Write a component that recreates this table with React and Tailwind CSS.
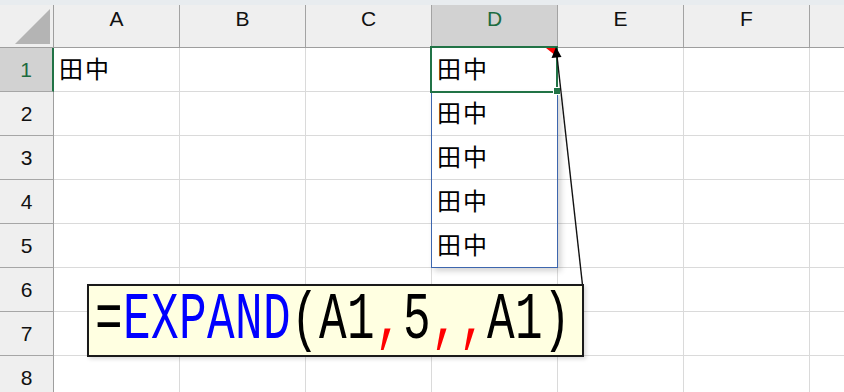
import React from "react";

const COLS = ["A", "B", "C", "D", "E", "F", ""];
const ROWS = [1, 2, 3, 4, 5, 6, 7, 8];

// cells holding a value: row -> column letter
const values = {
  1: { A: "田中", D: "田中" },
  2: { D: "田中" },
  3: { D: "田中" },
  4: { D: "田中" },
  5: { D: "田中" },
};

const GREEN = "#217346";

const CellText = ({ children }) => (
  <span className="pl-[5px] pb-[3px] text-[24px] leading-none tracking-[2px] text-black [font-family:'Noto_Sans_CJK_JP','Noto_Sans_CJK_SC',sans-serif]">
    {children}
  </span>
);

const HeaderRow = () => (
  <div className="flex h-[43px] bg-[#efefef] border-b border-[#9e9e9e]">
    <div className="w-[54px] shrink-0 border-r border-[#9e9e9e]">
      <svg width="53" height="42" viewBox="0 0 53 42">
        <polygon points="15,39 50,39 50,4" fill="#b4b4b4" />
      </svg>
    </div>
    {COLS.map((c, i) => {
      const active = c === "D";
      return (
        <div
          key={i}
          className={`w-[126px] shrink-0 border-r border-[#a3a3a3] flex justify-center pt-[3px] text-[21px] leading-[21px] [font-family:'Liberation_Sans',Arial,sans-serif] ${
            active ? "bg-[#d2d2d2] text-[#1d6b40]" : "text-[#111]"
          }`}
        >
          {c}
        </div>
      );
    })}
  </div>
);

const SheetRow = ({ n }) => {
  const active = n === 1;
  return (
    <div className="flex h-[44px]">
      <div
        className={`w-[54px] shrink-0 flex items-center justify-center border-b border-[#a6a6a6] text-[21px] [font-family:'Liberation_Sans',Arial,sans-serif] ${
          active
            ? "bg-[#d2d2d2] border-r-2 border-r-[#217346] text-[#1d6b40]"
            : "bg-[#efefef] border-r border-r-[#9e9e9e] text-[#111]"
        }`}
      >
        {n}
      </div>
      {COLS.map((c, i) => (
        <div
          key={i}
          className="w-[126px] shrink-0 flex items-center border-r border-b border-[#dadada]"
        >
          {values[n]?.[c] && <CellText>{values[n][c]}</CellText>}
        </div>
      ))}
    </div>
  );
};

export default function App() {
  return (
    <div className="relative w-[844px] h-[392px] overflow-hidden bg-white">
      <div className="h-[5px] bg-[#e8ecef]" />
      <HeaderRow />
      {ROWS.map((n) => (
        <SheetRow key={n} n={n} />
      ))}

      {/* spill range D2:D5 */}
      <div className="absolute left-[431px] top-[92px] w-[127px] h-[176px] border border-[#3d66ae] shadow-[3px_3px_6px_rgba(0,0,0,0.18)] pointer-events-none" />

      {/* active cell D1 */}
      <div
        className="absolute left-[430px] top-[46px] w-[128px] h-[47px] border-2 pointer-events-none"
        style={{ borderColor: GREEN }}
      />
      <div className="absolute left-[553px] top-[87px] w-[8px] h-[8px] bg-[#217346] border border-white" />

      {/* comment indicator + connector */}
      <svg
        className="absolute left-0 top-0 pointer-events-none"
        width="844"
        height="392"
        viewBox="0 0 844 392"
      >
        <polygon points="546,48 556,48 556,56" fill="#ff0000" />
        <line x1="557" y1="56" x2="582.5" y2="285" stroke="#111" strokeWidth="1.4" />
        <polygon points="556,47 551.5,58 561.5,57" fill="#000" />
      </svg>

      {/* comment box */}
      <div className="absolute left-[87px] top-[284px] w-[497px] h-[73px] bg-[#ffffe1] border-2 border-[#1a1a1a] flex items-center pl-[6px] shadow-[2px_2px_4px_rgba(0,0,0,0.15)]">
        <span className="inline-block scale-y-[1.45] text-[46px] leading-none tracking-[0.4px] whitespace-pre [font-family:'Liberation_Mono','DejaVu_Sans_Mono',monospace]">
          <span className="text-black">=</span>
          <span className="text-[#0000ff]">EXPAND</span>
          <span className="text-black">(A1</span>
          <span className="text-[#ff0000]">,</span>
          <span className="text-black">5</span>
          <span className="text-[#ff0000]">,,</span>
          <span className="text-black">A1)</span>
        </span>
      </div>
    </div>
  );
}
